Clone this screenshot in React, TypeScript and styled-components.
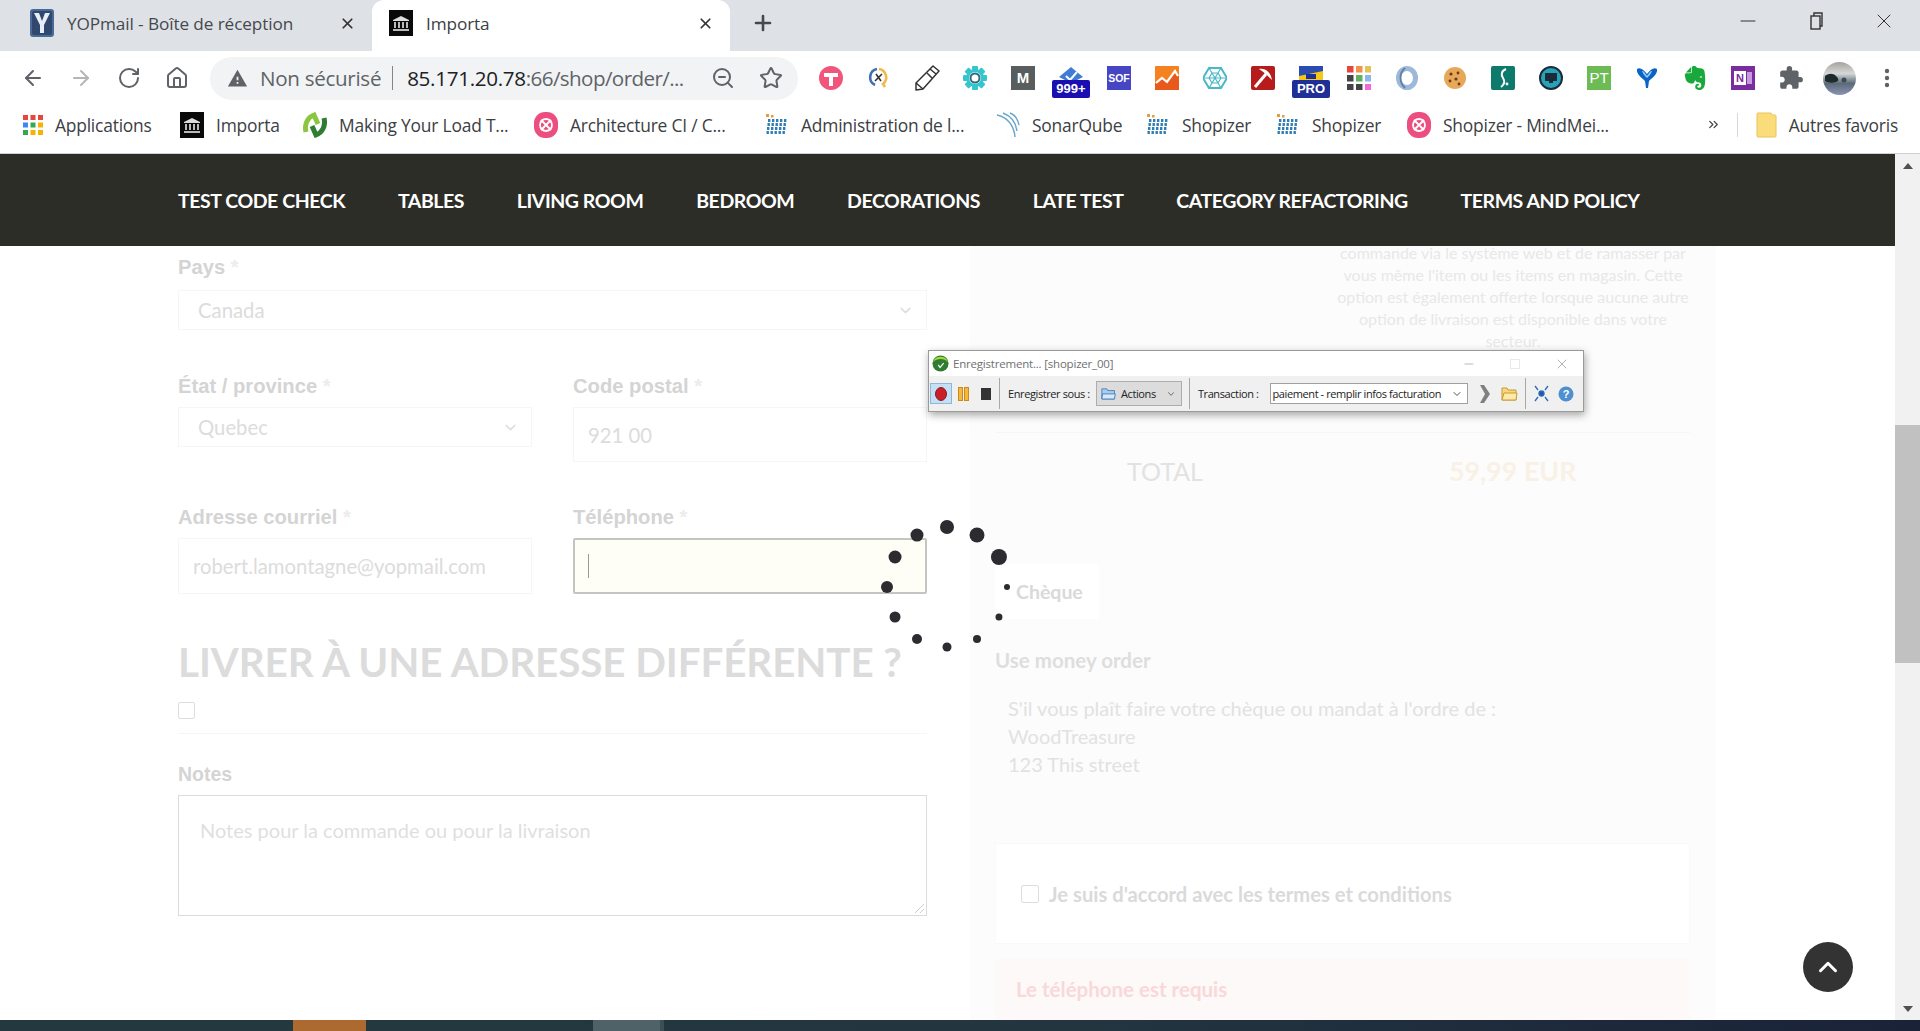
import React from "react";
import styled, { createGlobalStyle } from "styled-components";
import { ArrowLeft, ArrowRight, RotateCw, Home, ZoomOut, Star, X, Plus, Minus, ChevronDown, ChevronUp, ChevronsRight } from "lucide-react";
import { MdExtension, MdWarning } from "react-icons/md";
import { SiEvernote } from "react-icons/si";

const GlobalStyle = createGlobalStyle`
  html, body { margin: 0; padding: 0; background: #fff; overflow: hidden; }
  * { box-sizing: border-box; }
`;

const uiFont = `"Open Sans", "Noto Sans", sans-serif`;
const pageFont = `Lato, "Open Sans", sans-serif`;
const labelFont = `"Liberation Sans", Arial, sans-serif`;

const Page = styled.div`
  position: relative;
  width: 1920px;
  height: 1031px;
  overflow: hidden;
  display: flex;
  flex-direction: column;
  font-family: ${pageFont};
`;

/* browser chrome */
const TabStrip = styled.div`
  height: 51px;
  background: #dee1e6;
  display: flex;
  align-items: flex-end;
  font-family: ${uiFont};
`;
const Tab = styled.div<{ $active?: boolean; $w: number }>`
  position: relative;
  width: ${(p) => p.$w}px;
  height: 51px;
  padding: 0 16px 5px ${(p) => (p.$active ? 17 : 30)}px;
  display: flex;
  align-items: center;
  gap: 13px;
  border-radius: 12px 12px 0 0;
  background: ${(p) => (p.$active ? "#fff" : "transparent")};
  color: ${(p) => (p.$active ? "#3c4043" : "#45494d")};
  font-size: 17.2px;
  letter-spacing: -0.1px;
`;
const TabTitle = styled.span`
  flex: 1;
  white-space: nowrap;
`;
const NewTab = styled.div`
  margin-left: 21px;
  height: 51px;
  padding-bottom: 5px;
  display: flex;
  align-items: center;
  color: #45494d;
`;
const WindowButtons = styled.div`
  margin-left: auto;
  align-self: flex-start;
  display: flex;
  gap: 44px;
  padding: 9px 24px 0 0;
  color: #333;
`;

const Toolbar = styled.div`
  height: 52px;
  padding: 2px 0 0 21px;
  background: #fff;
  display: flex;
  align-items: center;
  color: #5f6368;
`;
const NavIcons = styled.div`
  display: flex;
  gap: 24px;
`;
const Omnibox = styled.div`
  width: 588px;
  height: 43px;
  margin-left: 21px;
  padding: 0 15px 0 17px;
  border-radius: 22px;
  background: #f1f3f4;
  display: flex;
  align-items: center;
  font-family: ${uiFont};
  font-size: 20.6px;
  letter-spacing: -0.3px;
  white-space: nowrap;
`;
const Insecure = styled.span`
  margin-left: 12px;
  color: #5f6368;
`;
const OmniSep = styled.span`
  width: 1px;
  height: 24px;
  margin: 0 14px 0 11px;
  background: #80868b;
`;
const Host = styled.span`
  color: #202124;
`;
const UrlPath = styled.span`
  color: #5f6368;
  letter-spacing: -0.6px;
`;
const OmniRight = styled.div`
  margin-left: auto;
  display: flex;
  gap: 24px;
`;
const Extensions = styled.div`
  margin-left: 21px;
  display: flex;
  align-items: center;
  gap: 24px;
`;
const ExtSlot = styled.div`
  position: relative;
  width: 24px;
  height: 24px;
  flex: none;
  display: flex;
  align-items: center;
  justify-content: center;
  & > * {
    flex: none;
  }
`;
const ExtBadge = styled.span<{ $bg: string }>`
  position: absolute;
  left: 50%;
  top: 14px;
  transform: translateX(-50%);
  padding: 0 2px;
  min-width: 38px;
  text-align: center;
  border-radius: 2px;
  background: ${(p) => p.$bg};
  color: #fff;
  font-family: "Liberation Sans", sans-serif;
  font-size: 13px;
  font-weight: 700;
  line-height: 18px;
`;

const Bookmarks = styled.div`
  height: 51px;
  padding: 0 22px 7px 23px;
  background: #fff;
  border-bottom: 1px solid #cfd1d4;
  display: flex;
  align-items: center;
  font-family: ${uiFont};
  font-size: 17.4px;
  letter-spacing: -0.2px;
  color: #3c4043;
`;
const Bookmark = styled.div<{ $w: number }>`
  width: ${(p) => p.$w}px;
  flex: none;
  display: flex;
  align-items: center;
  gap: 12px;
  white-space: nowrap;
`;
const BookmarkEnd = styled.div`
  margin-left: auto;
  display: flex;
  align-items: center;
  gap: 12px;
  white-space: nowrap;
`;
const BookmarkSep = styled.span`
  width: 1px;
  height: 24px;
  margin: 0 6px 0 4px;
  background: #d5d7da;
`;

/* page */
const Viewport = styled.div`
  height: 866px;
  display: flex;
`;
const Main = styled.div`
  width: 1895px;
  display: flex;
  flex-direction: column;
  overflow: hidden;
`;
const SiteNav = styled.nav`
  position: relative;
  z-index: 1;
  height: 92px;
  flex: none;
  padding-left: 178px;
  background: #2d2d28;
  display: flex;
  align-items: center;
  gap: 52.8px;
  color: #fff;
  font-size: 19.5px;
  font-weight: 700;
  letter-spacing: -0.44px;
  white-space: nowrap;
`;
const Content = styled.div`
  flex: 1;
  padding-left: 178px;
  display: flex;
  gap: 43px;
`;
const FormCol = styled.div`
  width: 749px;
  flex: none;
  padding-top: 9px;
`;
const Row = styled.div<{ $top?: number }>`
  margin-top: ${(p) => p.$top ?? 0}px;
  display: grid;
  grid-template-columns: 354px 354px;
  gap: 41px;
  align-items: start;
`;
const Field = styled.div<{ $gap?: number }>`
  display: flex;
  flex-direction: column;
  gap: ${(p) => p.$gap ?? 9}px;
`;
const Label = styled.div`
  font-family: ${labelFont};
  font-size: 20.2px;
  font-weight: 700;
  line-height: 24px;
  color: #d4d4d4;
  white-space: nowrap;
`;
const Req = styled.span`
  color: #ececec;
`;
const Control = styled.div<{ $h: number; $pad?: number }>`
  height: ${(p) => p.$h}px;
  padding: 0 12px 0 ${(p) => p.$pad ?? 19}px;
  display: flex;
  align-items: center;
  justify-content: space-between;
  border: 1px solid #f6f6f6;
  color: #dcdcdc;
  font-size: 20.3px;
`;
const PhoneInput = styled.div`
  height: 56px;
  padding-left: 13px;
  display: flex;
  align-items: center;
  background: #fffef6;
  border: 2px solid #c4c4c0;
  border-radius: 2px;
`;
const Caret = styled.span`
  width: 1px;
  height: 24px;
  background: #999;
`;
const Heading = styled.h2`
  margin: 43px 0 0;
  font-size: 40.4px;
  font-weight: 700;
  line-height: 50px;
  letter-spacing: -0.1px;
  color: #dcdcdc;
  white-space: nowrap;
`;
const CheckBox = styled.div<{ $size?: number }>`
  flex: none;
  width: ${(p) => p.$size ?? 17}px;
  height: ${(p) => p.$size ?? 17}px;
  border: 1px solid #dedede;
  border-radius: 2px;
  background: #fff;
`;
const AltCheck = styled.div`
  margin-top: 15px;
`;
const Rule = styled.div<{ $top: number }>`
  height: 1px;
  margin-top: ${(p) => p.$top}px;
  background: #f6f6f6;
`;
const NotesLabel = styled(Label)`
  margin-top: 28px;
  font-size: 19.5px;
`;
const Notes = styled.div`
  position: relative;
  height: 121px;
  margin-top: 9px;
  padding: 22px 21px;
  border: 1px solid #dcdcdc;
  color: #dfdfdf;
  font-size: 20px;
`;
const Grip = styled.svg`
  position: absolute;
  right: 1px;
  bottom: 1px;
`;

const SummaryCol = styled.div`
  width: 746px;
  flex: none;
  padding: 0 26px 0 25px;
  background: #fcfcfc;
`;
const ShippingNote = styled.div`
  width: 358px;
  margin: -4px -2px 0 auto;
  text-align: center;
  color: #e8e8e8;
  font-size: 16px;
  line-height: 22px;
`;
const TotalRow = styled.div`
  height: 76px;
  display: flex;
  align-items: center;
  padding-left: 132px;
  font-size: 25px;
`;
const TotalLabel = styled.span`
  color: #e2e2e2;
`;
const TotalValue = styled.span`
  margin-left: 246px;
  color: #f9f1e6;
  font-size: 26.8px;
  font-weight: 700;
`;
const PayTab = styled.div`
  width: 104px;
  height: 55px;
  margin-top: 55px;
  padding-left: 21px;
  display: flex;
  align-items: center;
  background: #fff;
  color: #d9d9d9;
  font-size: 19.5px;
  font-weight: 700;
`;
const PayTitle = styled.div`
  margin-top: 28px;
  color: #dedede;
  font-size: 20.5px;
  font-weight: 700;
  line-height: 26px;
`;
const PayText = styled.div`
  margin-top: 21px;
  padding-left: 13px;
  color: #e2e2e2;
  font-size: 20px;
  line-height: 28px;
`;
const TermsCard = styled.div`
  height: 101px;
  margin-top: 65px;
  padding-left: 25px;
  display: flex;
  align-items: center;
  gap: 10px;
  background: #fff;
  border: 1px solid #f9f9f9;
  color: #dadada;
  font-size: 20.2px;
  font-weight: 700;
`;
const Alert = styled.div`
  height: 66px;
  margin-top: 15px;
  padding: 17px 21px 0;
  background: #fdf9f9;
  color: #f9d8d8;
  font-size: 20.5px;
  font-weight: 700;
  line-height: 26px;
`;

const Scrollbar = styled.div`
  width: 25px;
  flex: none;
  background: #f1f1f1;
  display: flex;
  flex-direction: column;
  align-items: center;
`;
const Arrow = styled.div<{ $up?: boolean }>`
  width: 0;
  height: 0;
  margin: ${(p) => (p.$up ? "9px 0 0" : "auto 0 8px")};
  border-left: 5px solid transparent;
  border-right: 5px solid transparent;
  ${(p) => (p.$up ? "border-bottom: 6px solid #505050;" : "border-top: 6px solid #505050;")}
`;
const Thumb = styled.div`
  width: 100%;
  height: 238px;
  margin-top: 256px;
  background: #c1c1c1;
`;

const Taskbar = styled.div`
  height: 11px;
  flex: none;
  overflow: hidden;
  display: flex;
  background: linear-gradient(90deg, #24393f 0%, #233640 55%, #1a2238 100%);
  color: #fff;
  font-family: ${uiFont};
  font-size: 15px;
`;
const TaskItem = styled.div<{ $left: number; $w: number; $bg: string }>`
  margin-left: ${(p) => p.$left}px;
  width: ${(p) => p.$w}px;
  background: ${(p) => p.$bg};
`;
const Clock = styled.div`
  margin-left: auto;
  padding: 7px 22px 0 0;
`;

/* things that lie over the page */
const BackToTop = styled.div`
  position: absolute;
  left: 1803px;
  top: 942px;
  width: 50px;
  height: 50px;
  border-radius: 50%;
  background: #333;
  color: #fff;
  display: flex;
  align-items: center;
  justify-content: center;
`;
const Spinner = styled.svg`
  position: absolute;
  left: 867px;
  top: 507px;
`;
const Recorder = styled.div`
  position: absolute;
  left: 928px;
  top: 350px;
  width: 656px;
  height: 62px;
  border: 1px solid #9a9a9a;
  box-shadow: 1px 3px 8px rgba(0, 0, 0, 0.35);
  background: #f0f0f0;
  font-family: ${uiFont};
  font-size: 11px;
  letter-spacing: -0.4px;
  color: #222;
`;
const RecTitle = styled.div`
  height: 25px;
  padding: 0 13px 0 3px;
  background: #fff;
  display: flex;
  align-items: center;
  gap: 4px;
  color: #6f6f6f;
  font-size: 11.5px;
  letter-spacing: -0.2px;
  white-space: nowrap;
`;
const RecButtons = styled.div`
  margin-left: auto;
  display: flex;
  align-items: center;
  gap: 34px;
  color: #8a8a8a;
`;
const RecMax = styled.span`
  width: 10px;
  height: 10px;
  border: 1px solid #e8e8e8;
`;
const RecBar = styled.div`
  height: 35px;
  padding-left: 1px;
  display: flex;
  align-items: center;
  white-space: nowrap;
  & > * {
    flex: none;
  }
`;
const RecPressed = styled.div`
  width: 22px;
  height: 21px;
  display: flex;
  align-items: center;
  justify-content: center;
  background: #c5e0f5;
  border: 1px solid #8fb8d8;
`;
const RecSep = styled.span<{ $l: number; $r: number }>`
  width: 1px;
  height: 31px;
  margin: 0 ${(p) => p.$r}px 0 ${(p) => p.$l}px;
  background: #a8a8a8;
`;
const RecIcon = styled.span<{ $l: number }>`
  margin-left: ${(p) => p.$l}px;
  display: flex;
`;
const RecDrop = styled.div`
  width: 86px;
  height: 25px;
  margin-left: 6px;
  padding: 0 5px 0 4px;
  display: flex;
  align-items: center;
  gap: 5px;
  background: #dcdcdc;
  border: 1px solid #adadad;
`;
const RecCombo = styled.div`
  width: 198px;
  height: 21px;
  margin-left: 11px;
  padding: 0 4px 0 2px;
  display: flex;
  align-items: center;
  justify-content: space-between;
  background: #fff;
  border: 1px solid #a0a0a0;
`;
const Spacer = styled.span`
  flex: 1;
`;

/* small drawings */
const ImportaIcon = () => (
  <svg width="24" height="26" viewBox="0 0 24 26">
    <rect width="24" height="26" fill="#0a0a0a" />
    <path d="M4 10 12 6l8 4v1H4z" fill="#ddd" />
    <path d="M5 12h2v6H5zM9 12h2v6H9zM13 12h2v6h-2zM17 12h2v6h-2zM4 19h16v2H4z" fill="#bbb" />
  </svg>
);
const YopIcon = () => (
  <svg width="24" height="28" viewBox="0 0 24 28">
    <rect width="24" height="28" rx="3" fill="#4a6a96" />
    <rect x="2" y="2" width="20" height="24" rx="2" fill="#31486e" />
    <path d="M4 4h5l3 8 3-8h5l-6 12v8h-4v-8z" fill="#e8eef5" />
  </svg>
);
const AppsIcon = () => {
  const colors = ["#e8453c", "#e8453c", "#e8453c", "#4285f4", "#34a853", "#f4b400", "#34a853", "#f4b400", "#f4b400"];
  return (
    <svg width="20" height="20" viewBox="0 0 20 20">
      {colors.map((c, i) => (
        <rect key={i} x={(i % 3) * 7.5} y={Math.floor(i / 3) * 7.5} width="5" height="5" fill={c} />
      ))}
    </svg>
  );
};
const MindIcon = () => (
  <svg width="24" height="28" viewBox="0 0 24 28">
    <rect x="0" y="1" width="24" height="26" rx="11" fill="#ec4f7f" />
    <circle cx="12" cy="14" r="6" fill="none" stroke="#fff" strokeWidth="1.8" />
    <path d="M7 9l10 10M17 9 7 19" stroke="#fff" strokeWidth="1.8" />
  </svg>
);
const NeoloadIcon = () => (
  <svg width="24" height="26" viewBox="0 0 24 26" fill="none" strokeWidth="5">
    <path d="M3 20c-2-8 2-15 8-17l4 9" stroke="#8cc63f" />
    <path d="M21 6c2 8-2 15-8 17l-4-9" stroke="#2e7d32" />
  </svg>
);
const DotsFavicon = () => {
  const cells: React.ReactNode[] = [];
  for (let r = 0; r < 4; r++) {
    for (let c = 0; c < 5; c++) {
      cells.push(<rect key={`${r}-${c}`} x={3 + c * 4 - r * 0.5} y={7 + r * 4} width="2.4" height="3" fill="#2f7fb5" />);
    }
  }
  return (
    <svg width="24" height="26" viewBox="0 0 24 26">
      <rect x="1" y="2" width="3" height="3" fill="#e89a3c" />
      <rect x="6" y="3" width="2.5" height="2.5" fill="#e89a3c" />
      {cells}
    </svg>
  );
};
const SonarIcon = () => (
  <svg width="24" height="26" viewBox="0 0 24 26" fill="none" stroke="#6aa6c8" strokeWidth="1.4">
    <path d="M1 3c10 2 17 10 18 22" />
    <path d="M7 1c8 3 13 10 14 18" />
    <path d="M14 1c5 2 8 7 9 12" />
  </svg>
);
const FolderBookmark = () => (
  <svg width="21" height="26" viewBox="0 0 21 26">
    <path d="M1 2a1 1 0 0 1 1-1h13l1 2h3a1 1 0 0 1 1 1v20a1 1 0 0 1-1 1H2a1 1 0 0 1-1-1z" fill="#fbdc7b" stroke="#e8c45c" />
  </svg>
);

const Tile = ({ bg, size = 12, weight = 700, label }: { bg: string; size?: number; weight?: number; label: string }) => (
  <svg width="24" height="24" viewBox="0 0 24 24">
    <rect width="24" height="24" fill={bg} />
    <text x="12" y="12" dy="0.36em" textAnchor="middle" fill="#fff" fontFamily="Liberation Sans" fontSize={size} fontWeight={weight}>
      {label}
    </text>
  </svg>
);

const extensionIcons: React.ReactNode[] = [
  <svg key="t" width="24" height="24" viewBox="0 0 24 24">
    <circle cx="12" cy="12" r="12" fill="#f2557a" />
    <path d="M5 7h14v4h-5v9h-4v-9H5z" fill="#fff" />
  </svg>,
  <svg key="x" width="22" height="24" viewBox="0 0 22 24" fill="none">
    <path d="M9 3a8.500 8.500 0 0 0-2 16" stroke="#3f6fb5" strokeWidth="2.6" />
    <path d="M11 3a8.500 8.500 0 0 1 4 15l2 3" stroke="#f2b84b" strokeWidth="2.6" />
    <path d="M7 15l7-7M8 8l5 7" stroke="#333" strokeWidth="1.6" />
  </svg>,
  <svg key="pencil" width="26" height="28" viewBox="0 0 26 28" fill="none" stroke="#333" strokeWidth="1.5" strokeLinejoin="round">
    <path d="M19 2l6 5L9 25l-7 1 0-7z" />
    <path d="M16 5l6 5M13 9l5 5M2 19l7 6" />
  </svg>,
  <svg key="gear" width="24" height="24" viewBox="0 0 24 24">
    <g fill="#33c6cf">
      {[0, 45, 90, 135].map((a) => (
        <rect key={a} x="9" y="0" width="6" height="24" rx="1" transform={`rotate(${a} 12 12)`} />
      ))}
      <circle cx="12" cy="12" r="9" />
    </g>
    <circle cx="12" cy="12" r="6" fill="#fff" />
    <circle cx="12" cy="12" r="4.5" fill="none" stroke="#2f6a78" strokeWidth="2" />
  </svg>,
  <Tile key="m" bg="#585d5e" label="M" size={15} />,
  <svg key="mail" width="24" height="24" viewBox="0 0 24 24">
    <path d="M0 11 12 1l12 10-12 6z" fill="#3e7cd6" />
    <path d="M7 10l4 4 7-8" fill="none" stroke="#fff" strokeWidth="2" />
  </svg>,
  <Tile key="sof" bg="#4646c4" label="SOF" size={10.5} />,
  <svg key="chart" width="24" height="24" viewBox="0 0 24 24">
    <rect width="24" height="24" rx="1" fill="#f58220" />
    <path d="M0 24v-7l7-5 5 4 8-11 4 6v13z" fill="#e85a1c" />
    <path d="M1 17l6-5 5 4 8-11 3 5" fill="none" stroke="#fff" strokeWidth="2.2" />
  </svg>,
  <svg key="hex" width="24" height="24" viewBox="0 0 24 24" fill="none" stroke="#49b8c8" strokeWidth="1.2">
    <path d="M6 2h12l6 10-6 10H6L0 12z" strokeWidth="2" />
    <path d="M9 7h6l3 5-3 5H9l-3-5zM6 2l12 20M18 2 6 22M0 12h24" />
  </svg>,
  <svg key="pick" width="24" height="24" viewBox="0 0 24 24">
    <rect width="24" height="24" rx="2" fill="#b71c1c" />
    <path d="M4 21 15 8" stroke="#fff" strokeWidth="3" />
    <path d="M8 3c7-1 12 4 13 11-4-4-7-7-13-11z" fill="#fff" />
  </svg>,
  <svg key="pro" width="24" height="24" viewBox="0 0 24 24">
    <rect width="24" height="24" rx="1" fill="#f6c618" />
    <path d="M0 0h24v5L0 10z" fill="#2b4bb0" />
    <rect x="7" y="8" width="10" height="5" fill="#1f2f95" />
  </svg>,
  <svg key="grid" width="24" height="24" viewBox="0 0 24 24">
    {["#e8453c", "#f2914a", "#e4c35a", "#444", "#5fb35f", "#8ab8e8", "#444", "#444", "#f06ad8"].map((c, i) => (
      <rect key={i} x={(i % 3) * 9} y={Math.floor(i / 3) * 9} width="6.5" height="6.5" fill={c} />
    ))}
  </svg>,
  <svg key="ring" width="24" height="24" viewBox="0 0 24 24" fill="none">
    <ellipse cx="12" cy="12" rx="8.500" ry="9.500" stroke="#9db8d8" strokeWidth="5" />
    <path d="M10 2c-6 5-6 14 0 20" stroke="#5f7fa5" strokeWidth="1.8" />
  </svg>,
  <svg key="cookie" width="24" height="24" viewBox="0 0 24 24">
    <circle cx="12" cy="12" r="11" fill="#e8a85a" />
    <circle cx="8" cy="8" r="1.6" fill="#6b3a16" />
    <circle cx="15" cy="7" r="1.4" fill="#6b3a16" />
    <circle cx="13" cy="13" r="1.6" fill="#6b3a16" />
    <circle cx="7" cy="15" r="1.4" fill="#6b3a16" />
    <circle cx="16" cy="18" r="1.4" fill="#6b3a16" />
  </svg>,
  <svg key="s" width="24" height="24" viewBox="0 0 24 24">
    <rect width="24" height="24" rx="2" fill="#0d7a6c" />
    <path d="M15 3c-5 2-5 6-3 9s2 6-2 9" fill="none" stroke="#fff" strokeWidth="2" />
    <circle cx="16" cy="18" r="1.4" fill="#fff" />
  </svg>,
  <svg key="monitor" width="24" height="24" viewBox="0 0 24 24">
    <circle cx="12" cy="12" r="11" fill="#27a3b8" stroke="#1c2b3a" strokeWidth="2" />
    <rect x="6" y="7" width="12" height="8" fill="#1c2b3a" />
    <rect x="10" y="15" width="4" height="2" fill="#1c2b3a" />
  </svg>,
  <Tile key="pt" bg="#6dbb55" label="PT" size={15} weight={400} />,
  <svg key="funnel" width="22" height="24" viewBox="0 0 22 24">
    <path d="M1 3c3-2 6 0 10 5 4-5 7-7 10-5 1 5-5 9-8 12l-1 7h-2l-1-7C6 12 0 8 1 3z" fill="#0b63c5" />
    <path d="M6 5c2 0 3 2 5 5 2-3 3-5 5-5-1 3-3 5-5 7-2-2-4-4-5-7z" fill="#8fd0f5" />
  </svg>,
  <span key="evernote" style={{ display: "flex", color: "#18a83b" }}>
    <SiEvernote size={24} />
  </span>,
  <svg key="one" width="24" height="24" viewBox="0 0 24 24">
    <rect width="24" height="24" fill="#7a2d9e" />
    <rect x="3" y="5" width="12" height="14" fill="#fff" />
    <rect x="16" y="6" width="5" height="12" fill="#c79ade" />
    <text x="9" y="12" dy="0.36em" textAnchor="middle" fill="#7a2d9e" fontFamily="Liberation Sans" fontSize="11" fontWeight="700">
      N
    </text>
  </svg>,
  <span key="puzzle" style={{ display: "flex", color: "#5f6368" }}>
    <MdExtension size={26} />
  </span>,
  <svg key="avatar" width="33" height="33" viewBox="0 0 33 33">
    <defs>
      <linearGradient id="sky" x1="0" y1="0" x2="0" y2="1">
        <stop offset="0" stopColor="#a8a29c" />
        <stop offset="0.35" stopColor="#d5d8d8" />
        <stop offset="0.65" stopColor="#5c6a78" />
        <stop offset="1" stopColor="#8a94b4" />
      </linearGradient>
    </defs>
    <circle cx="16.5" cy="16.5" r="16.5" fill="url(#sky)" />
    <path d="M2 14c4-3 8-3 11 0s3 5 0 6-8 1-11-1z" fill="#1e2a2c" />
    <circle cx="21" cy="18" r="2.5" fill="#3a4a50" />
  </svg>,
  <svg key="menu" width="6" height="20" viewBox="0 0 6 20" fill="#5f6368">
    <circle cx="3" cy="3" r="2.2" />
    <circle cx="3" cy="10" r="2.2" />
    <circle cx="3" cy="17" r="2.2" />
  </svg>,
];

const RecFolder = ({ w = 17 }: { w?: number }) => (
  <svg width={w} height="15" viewBox="0 0 17 15">
    <path d="M1 2h5l1 2h8v10H1z" fill="#fbd775" stroke="#c79a3a" />
    <path d="M1 14l2-7h13l-1 7z" fill="#ffe9a8" stroke="#c79a3a" />
  </svg>
);

const navItems = ["TEST CODE CHECK", "TABLES", "LIVING ROOM", "BEDROOM", "DECORATIONS", "LATE TEST", "CATEGORY REFACTORING", "TERMS AND POLICY"];

const spinnerDots = [
  { a: -90, r: 7 },
  { a: -60, r: 7.5 },
  { a: -30, r: 8 },
  { a: 0, r: 3 },
  { a: 30, r: 3.5 },
  { a: 60, r: 4 },
  { a: 90, r: 4.5 },
  { a: 120, r: 5 },
  { a: 150, r: 5.5 },
  { a: 180, r: 6 },
  { a: 210, r: 6.5 },
  { a: 240, r: 6.5 },
];

export default function App() {
  return (
    <Page>
      <GlobalStyle />
      <TabStrip>
        <Tab $w={372}>
          <YopIcon />
          <TabTitle>YOPmail - Boîte de réception</TabTitle>
          <X size={17} strokeWidth={2.4} color="#333" />
        </Tab>
        <Tab $active $w={358}>
          <ImportaIcon />
          <TabTitle>Importa</TabTitle>
          <X size={17} strokeWidth={2.4} color="#333" />
        </Tab>
        <NewTab>
          <Plus size={24} strokeWidth={2.6} />
        </NewTab>
        <WindowButtons>
          <Minus size={24} strokeWidth={1} />
          <svg width="24" height="24" viewBox="0 0 24 24" fill="none" stroke="#333" strokeWidth="1.4">
            <rect x="7" y="7" width="9" height="13" />
            <path d="M10 7V4h8v13h-2" />
          </svg>
          <X size={24} strokeWidth={1} />
        </WindowButtons>
      </TabStrip>

      <Toolbar>
        <NavIcons>
          <ArrowLeft size={24} color="#5f6368" strokeWidth={2} />
          <ArrowRight size={24} color="#b4b6b9" strokeWidth={2} />
          <RotateCw size={24} color="#5f6368" strokeWidth={2} />
          <Home size={24} color="#5f6368" strokeWidth={2} />
        </NavIcons>
        <Omnibox>
          <MdWarning size={21} color="#5f6368" />
          <Insecure>Non sécurisé</Insecure>
          <OmniSep />
          <Host>85.171.20.78</Host>
          <UrlPath>:66/shop/order/...</UrlPath>
          <OmniRight>
            <ZoomOut size={24} color="#5f6368" />
            <Star size={24} color="#5f6368" />
          </OmniRight>
        </Omnibox>
        <Extensions>
          {extensionIcons.map((icon, i) => (
            <ExtSlot key={i}>
              {icon}
              {i === 5 && <ExtBadge $bg="#1a0fb0">999+</ExtBadge>}
              {i === 10 && <ExtBadge $bg="#1f2f95">PRO</ExtBadge>}
            </ExtSlot>
          ))}
        </Extensions>
      </Toolbar>

      <Bookmarks>
        <Bookmark $w={157}>
          <AppsIcon />
          Applications
        </Bookmark>
        <Bookmark $w={123}>
          <ImportaIcon />
          Importa
        </Bookmark>
        <Bookmark $w={231}>
          <NeoloadIcon />
          Making Your Load T...
        </Bookmark>
        <Bookmark $w={231}>
          <MindIcon />
          Architecture CI / C...
        </Bookmark>
        <Bookmark $w={231}>
          <DotsFavicon />
          Administration de l...
        </Bookmark>
        <Bookmark $w={150}>
          <SonarIcon />
          SonarQube
        </Bookmark>
        <Bookmark $w={130}>
          <DotsFavicon />
          Shopizer
        </Bookmark>
        <Bookmark $w={131}>
          <DotsFavicon />
          Shopizer
        </Bookmark>
        <Bookmark $w={231}>
          <MindIcon />
          Shopizer - MindMei...
        </Bookmark>
        <BookmarkEnd>
          <ChevronsRight size={15} color="#444" />
          <BookmarkSep />
          <FolderBookmark />
          Autres favoris
        </BookmarkEnd>
      </Bookmarks>

      <Viewport>
        <Main>
          <SiteNav>
            {navItems.map((item) => (
              <span key={item}>{item}</span>
            ))}
          </SiteNav>
          <Content>
            <FormCol>
              <Field $gap={11}>
                <Label>
                  Pays <Req>*</Req>
                </Label>
                <Control $h={40}>
                  Canada
                  <ChevronDown size={17} color="#dcdcdc" />
                </Control>
              </Field>
              <Row $top={44}>
                <Field>
                  <Label>
                    État / province <Req>*</Req>
                  </Label>
                  <Control $h={40}>
                    Quebec
                    <ChevronDown size={17} color="#dcdcdc" />
                  </Control>
                </Field>
                <Field>
                  <Label>
                    Code postal <Req>*</Req>
                  </Label>
                  <Control $h={55} $pad={14}>921 00</Control>
                </Field>
              </Row>
              <Row $top={43}>
                <Field>
                  <Label>
                    Adresse courriel <Req>*</Req>
                  </Label>
                  <Control $h={56} $pad={14}>robert.lamontagne@yopmail.com</Control>
                </Field>
                <Field>
                  <Label>
                    Téléphone <Req>*</Req>
                  </Label>
                  <PhoneInput>
                    <Caret />
                  </PhoneInput>
                </Field>
              </Row>
              <Heading>LIVRER À UNE ADRESSE DIFFÉRENTE ?</Heading>
              <AltCheck>
                <CheckBox />
              </AltCheck>
              <Rule $top={14} />
              <NotesLabel>Notes</NotesLabel>
              <Notes>
                Notes pour la commande ou pour la livraison
                <Grip width="12" height="12" viewBox="0 0 12 12" stroke="#cfcfcf">
                  <path d="M11 2 2 11M11 7l-4 4" />
                </Grip>
              </Notes>
            </FormCol>

            <SummaryCol>
              <ShippingNote>
                commande via le système web et de ramasser par vous même l'item ou les items en magasin. Cette option est également offerte lorsque aucune autre option de livraison est disponible dans votre secteur.
              </ShippingNote>
              <Rule $top={80} />
              <TotalRow>
                <TotalLabel>TOTAL</TotalLabel>
                <TotalValue>59,99 EUR</TotalValue>
              </TotalRow>
              <PayTab>Chèque</PayTab>
              <PayTitle>Use money order</PayTitle>
              <PayText>
                S'il vous plaît faire votre chèque ou mandat à l'ordre de :
                <br />
                WoodTreasure
                <br />
                123 This street
              </PayText>
              <TermsCard>
                <CheckBox $size={18} />
                Je suis d'accord avec les termes et conditions
              </TermsCard>
              <Alert>Le téléphone est requis</Alert>
            </SummaryCol>
          </Content>
        </Main>
        <Scrollbar>
          <Arrow $up />
          <Thumb />
          <Arrow />
        </Scrollbar>
      </Viewport>

      <Taskbar>
        <TaskItem $left={293} $w={73} $bg="#ad6a30" />
        <TaskItem $left={227} $w={67} $bg="#4f6268" />
        <TaskItem $left={0} $w={4} $bg="#3b5056" />
        <Clock>15:32</Clock>
      </Taskbar>

      <BackToTop>
        <ChevronUp size={30} strokeWidth={2.4} />
      </BackToTop>

      <Spinner width="160" height="160" viewBox="0 0 160 160">
        {spinnerDots.map((d) => (
          <circle
            key={d.a}
            cx={80 + 60 * Math.cos((d.a * Math.PI) / 180)}
            cy={80 + 60 * Math.sin((d.a * Math.PI) / 180)}
            r={d.r}
            fill="#2b2b30"
          />
        ))}
      </Spinner>

      <Recorder>
        <RecTitle>
          <svg width="17" height="17" viewBox="0 0 19 19">
            <circle cx="9.5" cy="9.5" r="9" fill="#2e7d32" />
            <path d="M1 8a9 9 0 0 1 17 0 12 12 0 0 0-17 0z" fill="#a5d63a" />
            <path d="M7 11l2 3 4-5" fill="none" stroke="#fff" strokeWidth="1.4" />
          </svg>
          Enregistrement... [shopizer_00]
          <RecButtons>
            <Minus size={14} strokeWidth={1} />
            <RecMax />
            <X size={16} strokeWidth={1} />
          </RecButtons>
        </RecTitle>
        <RecBar>
          <RecPressed>
            <svg width="12" height="14" viewBox="0 0 12 14">
              <ellipse cx="6" cy="7" rx="5.5" ry="6.5" fill="#c8202a" stroke="#8e1b1b" />
            </svg>
          </RecPressed>
          <RecIcon $l={6}>
            <svg width="11" height="14" viewBox="0 0 11 14">
              <rect x="0.5" y="0.5" width="4" height="13" fill="#f6b73c" stroke="#c98a20" />
              <rect x="6.5" y="0.5" width="4" height="13" fill="#f6b73c" stroke="#c98a20" />
            </svg>
          </RecIcon>
          <RecIcon $l={12}>
            <svg width="10" height="12" viewBox="0 0 10 12">
              <rect width="10" height="12" fill="#333" />
            </svg>
          </RecIcon>
          <RecSep $l={8} $r={8} />
          Enregistrer sous :
          <RecDrop>
            <svg width="18" height="15" viewBox="0 0 18 15">
              <path d="M1 2h6l1 2h8v10H1z" fill="#a9cdf0" stroke="#3f78b5" />
              <path d="M1 14l1-6h15l-1 6z" fill="#d8e9f9" stroke="#3f78b5" />
            </svg>
            Actions
            <Spacer />
            <ChevronDown size={12} color="#555" />
          </RecDrop>
          <RecSep $l={7} $r={8} />
          Transaction :
          <RecCombo>
            paiement - remplir infos facturation
            <ChevronDown size={12} color="#555" />
          </RecCombo>
          <RecIcon $l={11}>
            <svg width="11" height="18" viewBox="0 0 11 18">
              <path d="M1 0h4l6 9-6 9H1l5-9z" fill="#808080" />
            </svg>
          </RecIcon>
          <RecIcon $l={11}>
            <RecFolder />
          </RecIcon>
          <RecSep $l={7} $r={8} />
          <svg width="15" height="17" viewBox="0 0 15 17" fill="none" stroke="#2a6cb5" strokeWidth="1.3">
            <circle cx="7.5" cy="8.5" r="2.5" fill="#1a5cb0" />
            <path d="M1 1l3 4M14 1l-3 4M1 16l3-4M14 16l-3-4" />
          </svg>
          <RecIcon $l={9}>
            <svg width="16" height="16" viewBox="0 0 16 16">
              <circle cx="8" cy="8" r="7.5" fill="#4f8fd0" />
              <text x="8" y="8" dy="0.36em" textAnchor="middle" fill="#fff" fontFamily="Liberation Sans" fontSize="11" fontWeight="700">
                ?
              </text>
            </svg>
          </RecIcon>
        </RecBar>
      </Recorder>
    </Page>
  );
}
